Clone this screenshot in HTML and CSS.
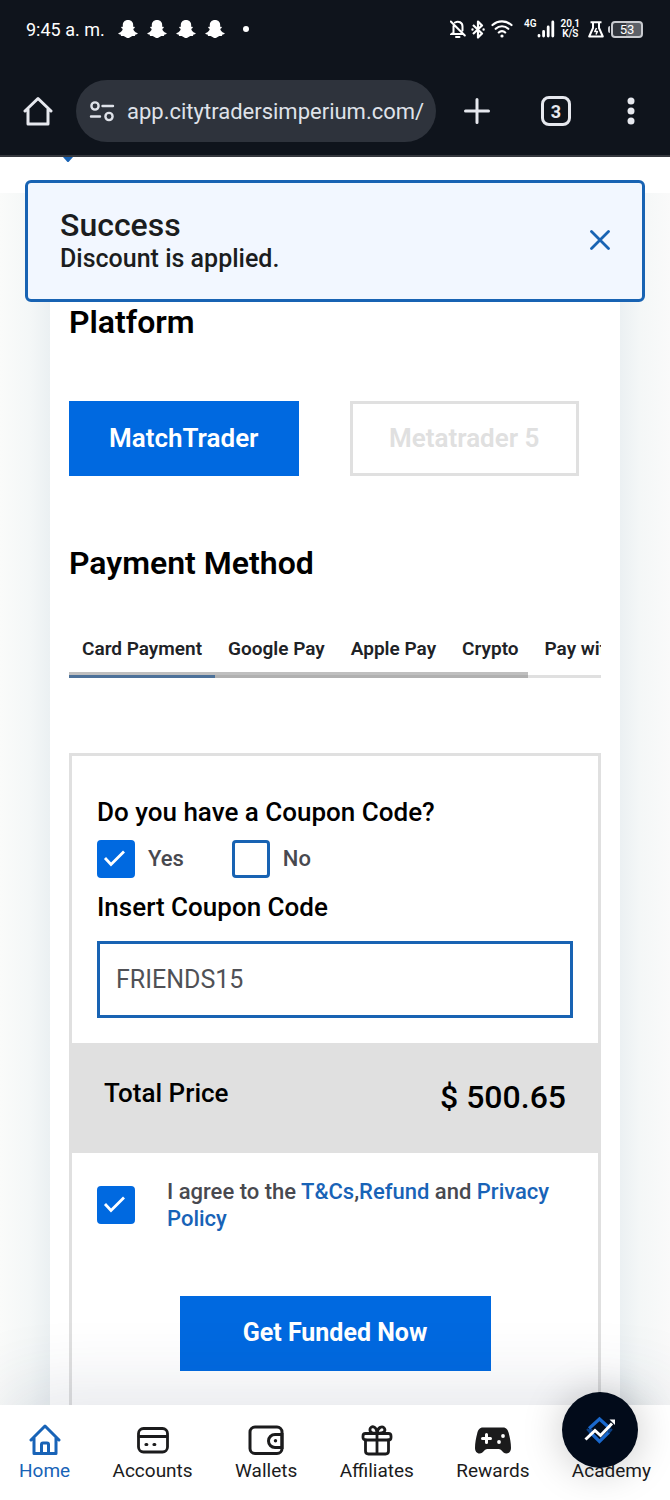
FILE: index.html
```html
<!DOCTYPE html>
<html lang="en">
<head>
<meta charset="utf-8">
<meta name="viewport" content="width=device-width, initial-scale=1">
<title>City Traders Imperium</title>
<link rel="stylesheet" href="styles.css">
</head>
<body>
<svg class="sprite" aria-hidden="true">
  <symbol id="ghost" viewBox="0 0 20 20"><path fill="currentColor" d="M10 1c3.300 0 5.200 2.200 5.200 5.200v1.700c1-.4 2 .3 1.400 1-.4.500-1.400.7-1.300 1.300.5 1.700 2 3.200 4 3.700.5.200.5.800 0 1.100-.7.500-1.900.4-2.100.9-.1.400.1.900-.5 1-.9.200-2-.3-3.300.5C12.200 18.200 11.300 19 10 19s-2.200-.8-3.400-1.600c-1.300-.8-2.400-.3-3.300-.5-.6-.1-.4-.6-.5-1-.2-.5-1.400-.4-2.100-.9-.5-.3-.5-.9 0-1.100 2-.5 3.500-2 4-3.700.1-.6-.9-.8-1.300-1.300-.6-.7.4-1.400 1.400-1V6.200C4.800 3.200 6.700 1 10 1z"/></symbol>
</svg>
<div class="app">
  <header class="chrome">
    <div class="status">
      <time class="clock">9:45 a. m.</time>
      <div class="notices">
        <svg><use href="#ghost"/></svg>
        <svg><use href="#ghost"/></svg>
        <svg><use href="#ghost"/></svg>
        <svg><use href="#ghost"/></svg>
      </div>
      <span class="more-dot"></span>
      <div class="system">
        <svg width="16" height="18" viewBox="0 0 16 18" fill="none" stroke="currentColor" stroke-width="2" stroke-linecap="round"><path d="M3.500 6v6.500L1.500 14h11M5 2.500C8.500.5 12.500 2.500 12.500 6.500v4M.8 1.500l14 14M6 17h3.500"/></svg>
        <svg width="14" height="19" viewBox="0 0 14 19" fill="none" stroke="currentColor" stroke-width="2.200" stroke-linejoin="round"><path d="M2 5l9 8.500L7 17.500v-16l4 4L2 14"/><path stroke-width="2.400" stroke-linecap="round" d="M1.500 9.500h0M12.600 9.500h0"/></svg>
        <svg class="wifi" width="22" height="18" viewBox="0 0 22 18" fill="none" stroke="currentColor" stroke-width="2.200" stroke-linecap="round"><path d="M1.500 5a14 14 0 0 1 19 0M4.700 8.800a9 9 0 0 1 12.600 0M7.800 12.400a4.500 4.500 0 0 1 6.400 0"/><circle cx="11" cy="16" r="1.600" fill="currentColor" stroke="none"/></svg>
        <span class="tiny gen">4G</span>
        <svg width="18" height="18" viewBox="0 0 18 18" stroke="currentColor" stroke-width="2.800" stroke-linecap="round"><path d="M2 15.500v.5M6.600 11.500V16M11.200 7v9M15.800 2v14"/></svg>
        <span class="tiny rate">20,1<br>K/S</span>
        <svg class="flask" width="16" height="17" viewBox="0 0 16 17" fill="none" stroke="currentColor" stroke-width="2" stroke-linejoin="round"><path d="M2.500 1.200h11M5 1.500v5.500L1.200 15.500h13.600L11 7V1.500"/><path stroke-width="1.500" d="M8.500 7L6.800 10.500h2.600L8 13.500"/></svg>
        <span class="battery">53</span>
      </div>
    </div>
    <div class="toolbar">
      <button class="tool" aria-label="Home page"><svg width="30" height="30" viewBox="0 0 30 30" fill="none" stroke="currentColor" stroke-width="3" stroke-linejoin="round" stroke-linecap="round"><path d="M2 15L15 2.500l13 12.500M5 13.500V28h20V13.500"/></svg></button>
      <label class="address">
        <svg width="26" height="22" viewBox="0 0 26 22" fill="none" stroke="currentColor" stroke-width="2.400" stroke-linecap="round"><circle cx="6" cy="6" r="3.600"/><path d="M13.500 6H24M2 16.500h9"/><circle cx="20" cy="16.500" r="3.600"/></svg>
        <input type="text" aria-label="Address" value="app.citytradersimperium.com/s" readonly>
      </label>
      <button class="tool plus" aria-label="New tab"><svg width="26" height="26" viewBox="0 0 26 26" stroke="currentColor" stroke-width="3" stroke-linecap="round"><path d="M13 1.500v23M1.500 13h23"/></svg></button>
      <button class="tool tabs-count" aria-label="Open tabs">3</button>
      <button class="tool dots" aria-label="Menu"><svg width="8" height="28" viewBox="0 0 8 28" fill="currentColor"><circle cx="4" cy="4" r="3.500"/><circle cx="4" cy="14" r="3.500"/><circle cx="4" cy="24" r="3.500"/></svg></button>
    </div>
  </header>

  <main class="page">
    <div class="strip"><svg width="12" height="6" viewBox="0 0 12 6"><path fill="#1862b3" d="M1 0h10L7 4.500q-1 1-2 0z"/></svg></div>
    <div class="toast" role="status">
      <div>
        <h2 class="toast-title">Success</h2>
        <p class="toast-text">Discount is applied.</p>
      </div>
      <button class="toast-close" aria-label="Close"><svg width="20" height="20" viewBox="0 0 20 20" stroke="currentColor" stroke-width="2.800" stroke-linecap="round"><path d="M1.500 1.500l17 17M18.500 1.500l-17 17"/></svg></button>
    </div>
    <div class="backdrop">
      <div class="card">
        <h1 class="heading">Platform</h1>
        <div class="platforms">
          <button class="btn btn-primary">MatchTrader</button>
          <button class="btn btn-outline" disabled>Metatrader 5</button>
        </div>
        <h1 class="heading">Payment Method</h1>
        <div class="methods">
          <div class="methods-list" role="tablist">
            <button class="method active" role="tab" aria-selected="true">Card Payment</button>
            <button class="method" role="tab">Google Pay</button>
            <button class="method" role="tab">Apple Pay</button>
            <button class="method" role="tab">Crypto</button>
            <button class="method" role="tab">Pay with Wallet</button>
          </div>
          <span class="thumb"></span>
        </div>
        <form class="panel">
          <div class="coupon">
            <h2 class="label">Do you have a Coupon Code?</h2>
            <div class="choices">
              <label class="choice"><input class="box" type="checkbox" checked>Yes</label>
              <label class="choice"><input class="box" type="checkbox">No</label>
            </div>
            <label class="label" for="code">Insert Coupon Code</label>
            <input class="code" id="code" type="text" value="FRIENDS15">
          </div>
          <div class="total"><span class="label">Total Price</span><span class="price">$ 500.65</span></div>
          <div class="agree">
            <input class="box" id="agree" type="checkbox" checked>
            <label for="agree">I agree to the <a href="#terms">T&amp;Cs</a>,<a href="#refund">Refund</a> and <a href="#privacy">Privacy Policy</a></label>
          </div>
          <button class="btn btn-primary submit" type="button">Get Funded Now</button>
        </form>
      </div>
    </div>
  </main>

  <nav class="bottom">
    <a class="item current" href="#home"><svg width="32" height="32" viewBox="0 0 32 32" fill="none" stroke="currentColor" stroke-width="3" stroke-linecap="round" stroke-linejoin="round"><path d="M2 16L16 2l14 14M5 14v15.500h22V14M12.500 29v-8.500q0-1.500 1.500-1.500h4q1.500 0 1.500 1.500V29"/></svg>Home</a>
    <a class="item" href="#accounts"><svg width="32" height="32" viewBox="0 0 32 32" fill="none" stroke="currentColor" stroke-width="2.800" stroke-linecap="round"><rect x="1.500" y="4.500" width="29" height="23.500" rx="5"/><path d="M2 12.500h28"/><path stroke-width="3.200" d="M9 20.500h.8M17 20.500h.8"/></svg>Accounts</a>
    <a class="item" href="#wallets"><svg width="36" height="32" viewBox="0 0 36 32" fill="none" stroke="currentColor" stroke-width="3" stroke-linecap="round"><rect x="2" y="3" width="32" height="26.500" rx="5"/><path d="M34 10.500h-7a6.500 6.500 0 0 0 0 13h7z"/><circle cx="27.500" cy="16.800" r="1.700" fill="currentColor" stroke="none"/></svg>Wallets</a>
    <a class="item" href="#affiliates"><svg width="32" height="32" viewBox="0 0 32 32" fill="none" stroke="currentColor" stroke-width="2.800" stroke-linecap="round" stroke-linejoin="round"><rect x="2" y="9.500" width="28" height="6.500" rx="2.500"/><path d="M4.500 16v11q0 3 3 3h17q3 0 3-3V16M16 9.500V30M16 9c-5 1-7.500-1-7-4 .7-3.500 6.500-3.500 7 4 .7-6 5.500-7.500 7.500-4.500 1.500 3-1.500 5.500-7.500 4.500"/></svg>Affiliates</a>
    <a class="item" href="#rewards"><svg width="38" height="32" viewBox="0 0 38 32"><path fill="currentColor" d="M9 3.500h20c3.500 0 5 2.500 5.700 5.500C36 14 37 19 37 24c0 3-1.800 5.500-4.500 5.500-4.500 0-4-4.500-8-4.500h-11c-4 0-3.500 4.500-8 4.500C2.800 29.500 1 27 1 24 1 19 2 14 3.300 9 4 6 5.500 3.500 9 3.500z"/><path stroke="#fff" stroke-width="3" stroke-linecap="round" d="M12.500 10.500v8M8.500 14.500h8"/><circle cx="29" cy="12" r="1.900" fill="#fff"/><circle cx="25" cy="18" r="1.900" fill="#fff"/></svg>Rewards</a>
    <a class="item" href="#academy"><svg width="32" height="32" viewBox="0 0 32 32" fill="none" stroke="currentColor" stroke-width="2.800"><path d="M5 12l11-5 11 5-11 5zM9 15v7q7 4 14 0v-7"/></svg>Academy</a>
    <button class="fab" aria-label="City Traders Imperium"><svg width="32" height="30" viewBox="0 0 32 30" fill="none"><path stroke="#1a68cc" stroke-width="3.200" d="M5 13.500L15.500 4 26 13.500M6 17l9.500 9.500L25 17"/><path stroke="#0c4186" stroke-width="2" d="M3 14l3.500 4M28 14l-3.500 4M4 15h4.500M22.500 15H28"/><path stroke="#fff" stroke-width="3" d="M1.500 24.500L11 15.500l5.500 5L28 8.500"/><path fill="#fff" d="M25.500 4.500H31V10z"/></svg></button>
  </nav>
</div>
</body>
</html>
```

FILE: styles.css
```css
* { box-sizing: border-box; }
body { margin: 0; font-family: Roboto, "Liberation Sans", sans-serif; color: #1b1d20; background: #fff; }
h1, h2, p { margin: 0; }
button { font: inherit; color: inherit; background: none; border: 0; padding: 0; cursor: pointer; }
input { font: inherit; color: inherit; margin: 0; }
a { color: #1863b7; text-decoration: none; }
svg { display: block; flex: none; }
.sprite { position: absolute; width: 0; height: 0; }
.app { height: 100vh; display: flex; flex-direction: column; overflow: hidden; }

.chrome { flex: none; background: #0f141c; color: #e6e8ee; border-bottom: 2px solid #35383e; }
.status { display: flex; align-items: center; height: 58px; padding: 0 27px 0 26px; color: #fff; }
.clock { font-size: 18px; }
.notices { display: flex; gap: 9px; margin-left: 13px; }
.notices svg { width: 20px; height: 20px; }
.more-dot { width: 6px; height: 6px; border-radius: 50%; background: #fff; margin-left: 18px; }
.system { display: flex; align-items: center; margin-left: auto; gap: 5px; }
.wifi { margin: 0 6px 0 1px; }
.tiny { font-size: 10px; line-height: 10px; font-weight: 600; text-align: center; }
.gen { align-self: flex-start; margin-right: -5px; }
.rate { margin-left: 1px; }
.flask { margin-left: 3px; }
.battery { position: relative; width: 32px; height: 17px; margin-left: 2px; border: 2px solid #c9cbd0; border-radius: 4px; background: linear-gradient(90deg, #33373e 47%, #5d6168 47%); font-size: 13px; line-height: 13px; text-align: center; }
.battery::before { content: ""; position: absolute; left: -5px; top: 3px; width: 2px; height: 7px; border-radius: 2px 0 0 2px; background: #c9cbd0; }

.toolbar { display: flex; align-items: flex-start; height: 97px; padding: 0 35px 0 23px; }
.tool { display: flex; align-items: center; justify-content: center; flex: none; height: 62px; margin-top: 22px; }
.address { flex: 1; min-width: 0; display: flex; align-items: center; gap: 12px; height: 62px; margin: 22px 0 0 23px; padding: 0 12px 0 13px; border-radius: 31px; background: #2e333c; color: #dfe2e9; }
.address input { flex: 1; min-width: 0; border: 0; padding: 0; background: none; outline: 0; font-size: 22px; }
.plus { margin-left: 28px; }
.tabs-count { width: 30px; height: 30px; margin: 38px 0 0 51px; border: 3px solid #e6e8ee; border-radius: 8px; font-size: 18px; font-weight: 700; }
.dots { margin-left: 56px; }

.page { position: relative; flex: 1; min-height: 0; overflow-y: auto; scrollbar-width: none; }
.strip { height: 36px; padding-left: 62px; }
.toast { position: absolute; z-index: 2; top: 23px; left: 25px; right: 25px; display: flex; align-items: center; justify-content: space-between; height: 122px; padding: 0 32px 2px; border: 3px solid #1863b3; border-radius: 6px; background: #f2f7ff; }
.toast-title { font-size: 32px; line-height: 38px; font-weight: 500; }
.toast-text { font-size: 25px; line-height: 30px; font-weight: 500; }
.toast-close { color: #1863b3; }

.backdrop { padding: 0 50px; background: linear-gradient(90deg, #fafbfa 0, #f4f7f7 30px, #ebf0f2 50px, #ebf0f2 calc(100% - 50px), #f4f7f7 calc(100% - 30px), #fafafa 100%); }
.card { padding: 110px 19px 60px; background: #fff; }
.heading { font-size: 32px; line-height: 38px; font-weight: 600; color: #000; }
.platforms { display: grid; grid-template-columns: 1fr 1fr; gap: 51px; margin: 60px 22px 68px 0; }
.btn { height: 75px; padding-bottom: 2px; font-size: 26px; font-weight: 600; }
.btn-primary { background: #0069e0; color: #fff; }
.btn-outline { border: 3px solid #e0e0e0; color: #e0e0e0; }
.methods { position: relative; margin: 47px 0 75px; }
.methods-list { display: flex; overflow: hidden; box-shadow: inset 0 -3px #e0e0e0; }
.method { flex: none; height: 49px; padding: 0 13px 8px; border-bottom: 3px solid transparent; font-size: 19px; font-weight: 600; color: #202226; }
.active { border-color: #1863b3; }
.thumb { position: absolute; left: 0; bottom: 0; width: 459px; height: 6px; background: rgba(128, 128, 128, .5); }

.panel { border: 3px solid #e0e0e0; padding-bottom: 60px; }
.coupon { padding: 41px 25px 25px; }
.label { display: block; font-size: 26px; line-height: 30px; font-weight: 500; color: #000; }
.choices { display: flex; gap: 48px; margin: 13px 0 14px; }
.choice { display: flex; align-items: center; gap: 13px; font-size: 22px; line-height: 30px; font-weight: 500; color: #48494f; }
.box { appearance: none; flex: none; width: 38px; height: 38px; border: 3px solid #1863b3; border-radius: 4px; background: #fff; }
.box:checked { border-color: #0069e0; background: #0069e0 url("data:image/svg+xml,%3Csvg xmlns='http://www.w3.org/2000/svg' viewBox='0 0 32 32' fill='none' stroke='white' stroke-width='2.800'%3E%3Cpath d='M5 15l6 6.500L24 8.500'/%3E%3C/svg%3E") center / 32px no-repeat; }
.code { display: block; width: 100%; height: 77px; margin-top: 19px; padding: 0 16px; border: 3px solid #1863b3; border-radius: 0; background: #fff; color: #505156; font-size: 25px; outline: 0; }
.total { display: flex; align-items: flex-start; justify-content: space-between; height: 110px; padding: 35px 32px 0; background: #e0e0e0; }
.price { font-size: 32px; line-height: 38px; font-weight: 500; color: #000; }
.agree { display: flex; align-items: center; gap: 32px; padding: 25px 25px 0; font-size: 22px; line-height: 27px; font-weight: 500; color: #48494f; }
.submit { display: block; width: 311px; margin: 64px auto 0; font-size: 25px; font-weight: 700; }

.bottom { position: relative; z-index: 3; flex: none; display: flex; justify-content: space-between; height: 95px; padding: 19px 19px 0; background: #fff; box-shadow: 0 -10px 80px rgba(40, 60, 90, .14); }
.item { display: flex; flex-direction: column; align-items: center; gap: 3px; font-size: 19px; line-height: 24px; color: #1b1b1c; }
.current { color: #1863b7; }
.fab { position: absolute; top: -13px; right: 32px; display: flex; align-items: center; justify-content: center; width: 76px; height: 76px; border-radius: 50%; background: #020b1a; box-shadow: 0 2px 40px rgba(0, 0, 0, .22); }
```
